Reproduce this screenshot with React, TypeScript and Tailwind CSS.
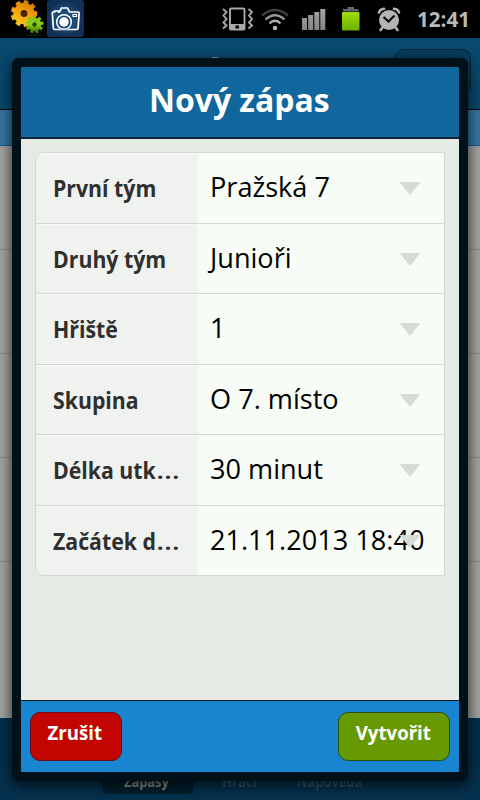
import type { ReactNode } from "react";

type Field = { label: string; value: string; clipped?: boolean };

const FIELDS: Field[] = [
  { label: "První tým", value: "Pražská 7" },
  { label: "Druhý tým", value: "Junioři" },
  { label: "Hřiště", value: "1" },
  { label: "Skupina", value: "O 7. místo" },
  { label: "Délka utk", value: "30 minut", clipped: true },
  { label: "Začátek d", value: "21.11.2013 18:40", clipped: true },
];

function GearsIcon() {
  const teeth = [0, 40, 80, 120, 160, 200, 240, 280, 320];
  return (
    <svg width="36" height="37" viewBox="0 0 36 37">
      <defs>
        <linearGradient id="gearOrange" gradientUnits="userSpaceOnUse" x1="20" y1="0" x2="8" y2="26">
          <stop offset="0" stopColor="#c07a0a" />
          <stop offset="0.45" stopColor="#f79a08" />
          <stop offset="1" stopColor="#f8cc1c" />
        </linearGradient>
        <linearGradient id="gearGreen" gradientUnits="userSpaceOnUse" x1="24" y1="16" x2="24" y2="34">
          <stop offset="0" stopColor="#7dc413" />
          <stop offset="0.5" stopColor="#8ccc1c" />
          <stop offset="1" stopColor="#2c5c08" />
        </linearGradient>
      </defs>
      <g fill="url(#gearOrange)" stroke="url(#gearOrange)">
        <circle cx="14" cy="13.5" r="7" fill="none" strokeWidth="7.500" />
        {teeth.map((a) => {
          const t = ((a + 10) * Math.PI) / 180;
          return (
            <line
              key={a}
              x1={14 + 9 * Math.sin(t)}
              y1={13.5 - 9 * Math.cos(t)}
              x2={14 + 13.2 * Math.sin(t)}
              y2={13.5 - 13.2 * Math.cos(t)}
              strokeWidth="4.800"
            />
          );
        })}
      </g>
      <circle cx="14" cy="13.500" r="3.200" fill="#4a2403" />
      <g stroke="url(#gearGreen)">
        <circle cx="24.500" cy="24.500" r="4.300" fill="none" strokeWidth="4.800" />
        {teeth.map((a) => {
          const t = (a * Math.PI) / 180 + 0.01;
          return (
            <line
              key={a}
              x1={24.5 + 5 * Math.sin(t)}
              y1={24.5 - 5 * Math.cos(t)}
              x2={24.5 + 9 * Math.sin(t)}
              y2={24.5 - 9 * Math.cos(t)}
              strokeWidth="3.200"
            />
          );
        })}
      </g>
      <circle cx="24.500" cy="24.500" r="2" fill="#1d4506" />
      <ellipse cx="24" cy="35" rx="8" ry="1.200" fill="#0b1a05" />
    </svg>
  );
}

function CameraIcon() {
  return (
    <svg width="37" height="37" viewBox="0 0 37 37">
      <defs>
        <radialGradient id="cameraGlow">
          <stop offset="0" stopColor="#2b6390" />
          <stop offset="1" stopColor="#112f57" />
        </radialGradient>
      </defs>
      <rect width="37" height="37" rx="3" fill="url(#cameraGlow)" />
      <path
        d="M6 12h1.500v-1h4v1h1l2-4h6l2 4h8.500q1.300 0 1.100 1.300l-1 14.700q-.1 1.500-1.400 1.500h-22q-1.300 0-1.400-1.500l-1-14.700q-.1-1.300.7-1.300z"
        fill="#1d4c78"
        stroke="#fff"
        strokeWidth="1.700"
      />
      <path d="M26 14.500h3.500v2H26z" fill="none" stroke="#fff" strokeWidth="1.200" />
      <circle cx="17" cy="22" r="8.500" fill="#1d4c78" />
      <circle cx="17" cy="22" r="7.300" fill="none" stroke="#fff" strokeWidth="1.500" />
      <circle cx="17" cy="22" r="4.700" fill="#fff" />
    </svg>
  );
}

function VibrateIcon() {
  return (
    <svg width="32" height="24" viewBox="0 0 32 24" fill="none" stroke="#a9a9a9">
      <path
        d="M1 2l3.500 3L1.500 8.500 4.500 12 1.500 15.500l3 3-3.500 3M26.500 2l3.500 3-3 3.500 3 3.500-3 3.500 3 3-3.500 3"
        strokeWidth="1.900"
      />
      <rect x="8" y="1.500" width="14.500" height="21" rx="1" strokeWidth="1.900" />
      <path d="M8 17h14.500v6H8z" fill="#a9a9a9" stroke="none" />
      <path d="M13.500 18.500h3.500v3h-3.500z" fill="#000" stroke="none" />
    </svg>
  );
}

function WifiIcon() {
  return (
    <svg width="28" height="24" viewBox="0 0 28 24" fill="none" strokeWidth="2.300">
      <path d="M1 7.500Q14-3.500 27 7.500" stroke="#3d4040" />
      <path d="M4.500 11.500Q14 3 23.500 11.500" stroke="#969898" />
      <path d="M8.500 15.500Q14 10 19.500 15.500" stroke="#b4b4b4" />
      <circle cx="14" cy="20" r="2.200" fill="#b8b8b8" />
    </svg>
  );
}

function SignalIcon() {
  return (
    <svg width="24" height="22" viewBox="0 0 24 22">
      <defs>
        <linearGradient id="signalBars" x1="0" y1="0" x2="0" y2="1">
          <stop offset="0" stopColor="#a4a4a2" />
          <stop offset="1" stopColor="#858583" />
        </linearGradient>
      </defs>
      <path d="M0 9h5v12H0zM6.200 6h5V21h-5zM12.300 3h5V21h-5zM18.300 0h5v21h-5z" fill="url(#signalBars)" />
    </svg>
  );
}

function BatteryIcon() {
  return (
    <svg width="18" height="25" viewBox="0 0 18 25">
      <defs>
        <linearGradient id="batteryFill" x1="0" y1="0" x2="0" y2="1">
          <stop offset="0" stopColor="#a0dc08" />
          <stop offset="1" stopColor="#6bb000" />
        </linearGradient>
      </defs>
      <path d="M5.500 0h6.500v2h4.500v2.500H1V2h4.500z" fill="#62676c" />
      <rect x="0" y="5" width="17.500" height="18.500" rx="1" fill="url(#batteryFill)" />
    </svg>
  );
}

function AlarmIcon() {
  return (
    <svg width="24" height="25" viewBox="0 0 24 25">
      <g stroke="#b4b4b4" fill="none" strokeWidth="2.600" strokeLinecap="round">
        <path d="M2 5.500Q3 2 7 1.800M22 5.500Q21 2 17 1.800" />
        <path d="M5.500 20.500L3.500 23M18.500 20.500L20.500 23" />
      </g>
      <circle cx="12" cy="13" r="10" fill="#b4b4b4" />
      <path d="M6.500 10l5 4.500 6-6" fill="none" stroke="#0a0a0a" strokeWidth="2.200" />
    </svg>
  );
}

function StatusBar() {
  return (
    <div className="flex h-[38px] bg-black">
      <div className="ml-[10px] w-[37px]">
        <GearsIcon />
      </div>
      <CameraIcon />
      <div className="mt-[7px] ml-[138px]">
        <VibrateIcon />
      </div>
      <div className="mt-[8px] ml-[7px]">
        <WifiIcon />
      </div>
      <div className="mt-[9px] ml-[13px]">
        <SignalIcon />
      </div>
      <div className="mt-[7px] ml-[16px]">
        <BatteryIcon />
      </div>
      <div className="mt-[7px] ml-[17px]">
        <AlarmIcon />
      </div>
      <div className="ml-[16px] text-[21px] leading-[39px] font-bold whitespace-nowrap text-[#b9b9b9]">
        <span className="inline-block origin-left scale-x-[0.98]">12:41</span>
      </div>
    </div>
  );
}

// Dimmed screen behind the dialog
function Background() {
  return (
    <div className="flex flex-1 flex-col">
      <div className="flex h-[71px] bg-[#094a70] pt-[11px] pr-[9px]">
        <div className="mt-[8px] ml-[212px] h-[2px] w-[6px] bg-[#8b9ba3]" />
        <div className="ml-auto h-[46px] w-[76px] rounded-[9px] border border-[#04273d] bg-[#07405f]" />
      </div>
      <div className="h-[37px] border-t border-b border-t-black border-b-[#105d91] bg-[#377aa8]" />
      <div className="flex-1 bg-[#a5a7a4]">
        <div className="h-[104px] border-b border-[#8d8f8c]" />
        <div className="h-[104px] border-b border-[#8d8f8c]" />
        <div className="h-[104px] border-b border-[#8d8f8c]" />
        <div className="h-[104px] border-b border-[#8d8f8c]" />
      </div>
      <div className="flex h-[82px] items-end bg-[#05324f] pb-[6px] text-[14px] leading-[24px] font-bold text-[#2a5876]">
        <div className="ml-[102px] w-[92px] rounded-[6px] bg-[#03202f] pr-[3px] text-center text-[#8b9190]">
          <span className="inline-block scale-x-[0.92]">Zápasy</span>
        </div>
        <div className="ml-[28px] w-[75px]">
          <span className="inline-block origin-left scale-x-[0.94]">Hráči</span>
        </div>
        <div className="origin-left scale-x-[0.92]">Nápověda</div>
      </div>
    </div>
  );
}

function FieldRow({ field, last }: { field: Field; last: boolean }) {
  return (
    <div className={`flex min-h-0 flex-1 ${last ? "" : "border-b border-[#d3d8d3]"}`}>
      <div className="w-[162px] border-t border-[#f8faf8] bg-[#eff2ee] pl-[17px] text-[23.5px] leading-[69px] font-bold whitespace-nowrap text-[#2f2f2f]">
        <span className="inline-block origin-left scale-x-[0.905]">
          {field.label}
          {field.clipped && <span className="inline-block origin-left scale-x-[1.35] font-semibold">…</span>}
        </span>
      </div>
      <div className="relative flex-1 bg-[#f8fcf7] pl-[12px] text-[27px] leading-[68px] whitespace-nowrap text-black">
        <span className="inline-block origin-left scale-x-[1.004]">{field.value}</span>
        <svg className="absolute top-[29px] right-[23px]" width="22" height="13" viewBox="0 0 22 13">
          <path d="M0.500 0h21L11 13z" fill="#d7dbd6" />
        </svg>
      </div>
    </div>
  );
}

function DialogButton({ className, children }: { className: string; children: ReactNode }) {
  return (
    <button className={`h-[49px] rounded-[10px] border pr-[2px] pb-[6px] text-[19px] font-bold text-white ${className}`}>
      <span className="inline-block scale-x-[0.98]">{children}</span>
    </button>
  );
}

function Dialog() {
  return (
    <div className="absolute top-[58px] left-[12px] flex h-[723px] w-[456px] flex-col rounded-[6px] border-[9px] border-[#001119] shadow-[0_4px_16px_rgba(0,0,0,0.8)]">
      <div className="h-[72px] border-b-2 border-[#06233a] bg-[#10679e] pr-[2px] text-center text-[33px] leading-[66px] font-bold text-white">
        <span className="inline-block scale-x-[0.968]">Nový zápas</span>
      </div>
      <div className="flex-1 bg-[#e6eae5] pt-[13px] pl-[14px]">
        <div className="flex h-[424px] w-[410px] flex-col overflow-hidden rounded-l-[9px] border border-[#d3d8d3]">
          {FIELDS.map((field, i) => (
            <FieldRow key={field.label} field={field} last={i === FIELDS.length - 1} />
          ))}
        </div>
      </div>
      <div className="flex h-[72px] justify-between border-t border-[#00131f] bg-[#1885d1] px-[9px] pt-[11px]">
        <DialogButton className="w-[92px] border-[#6a0d1c] bg-[#c20500]">Zrušit</DialogButton>
        <DialogButton className="w-[112px] border-[#2c4d0c] bg-[#679a02]">Vytvořit</DialogButton>
      </div>
    </div>
  );
}

export default function App() {
  return (
    <div className="relative flex h-[800px] w-[480px] flex-col overflow-hidden font-['Open_Sans','Noto_Sans',sans-serif]">
      <StatusBar />
      <Background />
      <Dialog />
    </div>
  );
}
